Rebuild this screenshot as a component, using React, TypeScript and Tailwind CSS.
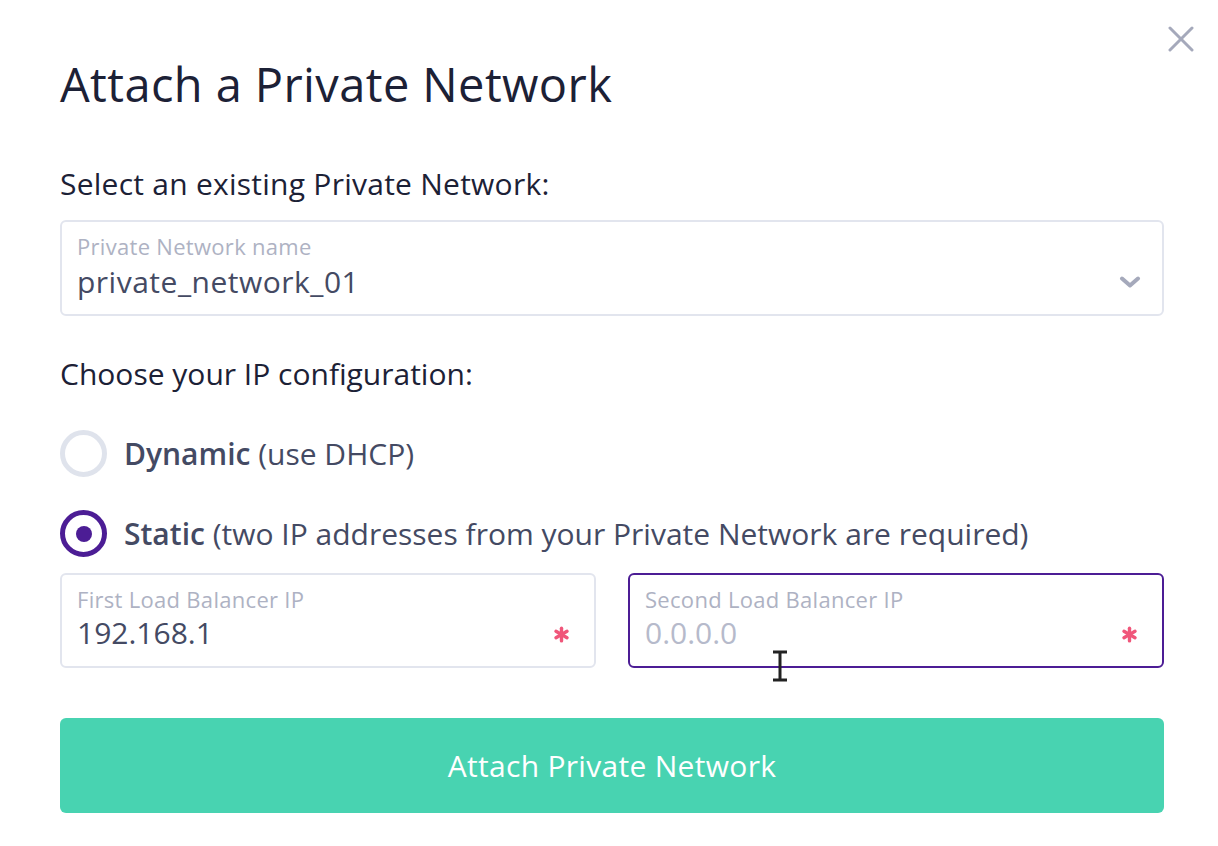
import React from 'react';

const font = { fontFamily: '"Open Sans", Lato, sans-serif' };

const Asterisk = () => (
  <svg width="17" height="17" viewBox="0 0 16 16" className="shrink-0">
    <g stroke="#f0567a" strokeWidth="3.2" strokeLinecap="round">
      <line x1="8" y1="2" x2="8" y2="14" />
      <line x1="2.8" y1="5" x2="13.2" y2="11" />
      <line x1="2.8" y1="11" x2="13.2" y2="5" />
    </g>
  </svg>
);

const IpField: React.FC<{ label: string; value?: string; placeholder?: string; focused?: boolean }> = ({
  label,
  value,
  placeholder,
  focused,
}) => (
  <div
    className={
      focused
        ? 'flex-1 h-[95px] rounded-md border-2 border-[#4c1d95] pl-[15px] pr-[24px] pt-[10px] flex items-start'
        : 'flex-1 h-[95px] rounded-md border-2 border-[#e2e5ee] pl-[15px] pr-[24px] pt-[10px] flex items-start'
    }
  >
    <div className="flex-1 flex flex-col">
      <span className="text-[22px] leading-[28px] tracking-[0.3px] text-[#aeb2c3]">{label}</span>
      {value ? (
        <span className="mt-[2px] text-[30px] leading-[36px] text-[#444a63]">{value}</span>
      ) : (
        <span className="mt-[2px] text-[30px] leading-[36px] text-[#b6bacb]">{placeholder}</span>
      )}
    </div>
    <div className="self-center mt-[18px]">
      <Asterisk />
    </div>
  </div>
);

const App: React.FC = () => {
  return (
    <div className="w-[1218px] h-[846px] bg-white relative overflow-hidden" style={font}>
      <button className="absolute top-[26px] right-[24px] text-[#a5a9bb]">
        <svg width="26" height="26" viewBox="0 0 26 26">
          <g stroke="currentColor" strokeWidth="3" strokeLinecap="round">
            <line x1="2" y1="2" x2="24" y2="24" />
            <line x1="24" y1="2" x2="2" y2="24" />
          </g>
        </svg>
      </button>

      <div className="px-[60px] pt-[52px] w-[1224px]">
        <h1 className="text-[47px] leading-[64px] tracking-[0.4px] text-[#1c2136]">Attach a Private Network</h1>

        <p className="mt-[48px] text-[30px] leading-[40px] tracking-[0.25px] text-[#1c2136]">
          Select an existing Private Network:
        </p>

        <div className="mt-[16px] w-[1104px] h-[96px] rounded-md border-2 border-[#e2e5ee] pl-[15px] pr-[21px] pt-[10px] flex items-start">
          <div className="flex-1 flex flex-col">
            <span className="text-[22px] leading-[28px] tracking-[0.3px] text-[#aeb2c3]">Private Network name</span>
            <span className="mt-[4px] text-[30px] leading-[36px] tracking-[0.5px] text-[#444a63]">private_network_01</span>
          </div>
          <svg width="22" height="12" viewBox="0 0 22 12" className="self-center mt-[18px]">
            <polyline points="3,2.5 11,9.5 19,2.5" fill="none" stroke="#a5a9bb" strokeWidth="4" strokeLinecap="round" strokeLinejoin="round" />
          </svg>
        </div>

        <p className="mt-[38px] text-[30px] leading-[40px] text-[#1c2136]">Choose your IP configuration:</p>

        <div className="mt-[36px] flex items-center gap-[17px]">
          <span className="w-[47px] h-[47px] rounded-full border-[5px] border-[#dfe3ec]" />
          <span className="text-[30px] leading-[40px] text-[#444a63]">
            <span className="font-semibold">Dynamic</span> (use DHCP)
          </span>
        </div>

        <div className="mt-[33px] flex items-center gap-[17px]">
          <span className="w-[47px] h-[47px] rounded-full border-[5px] border-[#4c1d95] flex items-center justify-center">
            <span className="w-[16px] h-[16px] rounded-full bg-[#4c1d95]" />
          </span>
          <span className="text-[30px] leading-[40px] text-[#444a63]">
            <span className="font-semibold">Static</span> (two IP addresses from your Private Network are required)
          </span>
        </div>

        <div className="mt-[16px] w-[1104px] flex gap-[32px]">
          <IpField label="First Load Balancer IP" value="192.168.1" />
          <IpField label="Second Load Balancer IP" placeholder="0.0.0.0" focused />
        </div>

        <button className="mt-[50px] w-[1104px] h-[95px] rounded-md bg-[#48d3b1] text-white text-[30px] tracking-[0.3px]">
          Attach Private Network
        </button>
      </div>

      <svg className="absolute left-[771px] top-[650px]" width="18" height="32" viewBox="0 0 18 32">
        <path d="M2 2h14M2 30h14M9 2v28" stroke="#222" strokeWidth="3" fill="none" />
      </svg>
    </div>
  );
};

export default App;
